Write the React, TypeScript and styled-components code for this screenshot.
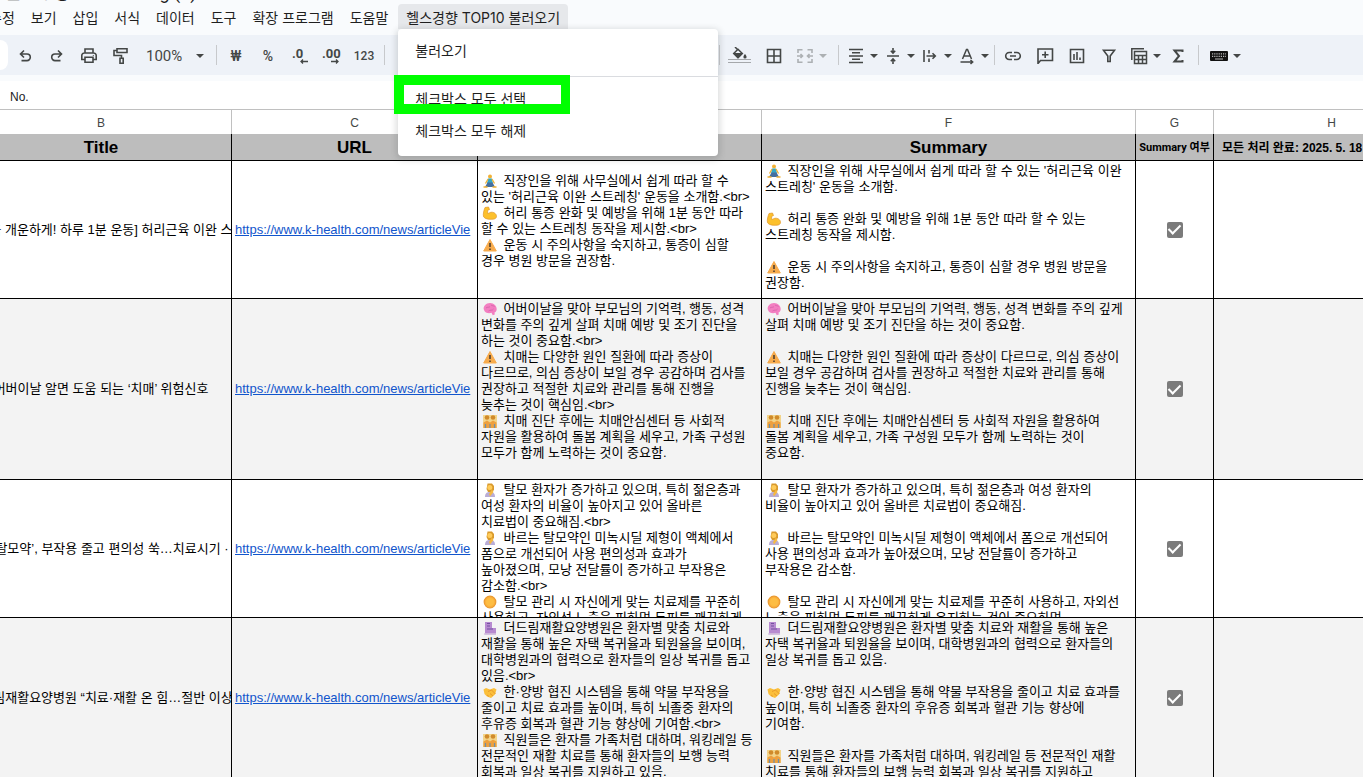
import React from 'react';
import styled, { createGlobalStyle } from 'styled-components';

const sheetFont = '"Liberation Sans", "Noto Sans CJK KR", sans-serif';
const uiFont = 'Roboto, "Noto Sans CJK KR", sans-serif';
const menuFont = 'Inter, "Noto Sans CJK KR", sans-serif';

const GlobalStyle = createGlobalStyle`
  * { box-sizing: border-box; }
  body { margin: 0; background: #fff; font-family: ${sheetFont}; color: #000; }
  button, select, input { font: inherit; color: inherit; margin: 0; }
`;

const Page = styled.div`
  display: flex;
  flex-direction: column;
  height: 100vh;
  overflow: hidden;
  background: #f9fbfd;
`;

const TitleBar = styled.header`
  display: flex;
  align-items: flex-end;
  height: 4px;
  overflow: hidden;
  padding-left: 4px;
  font: 18px/22px ${uiFont};
  color: #1f1f1f;
  white-space: pre;
`;

const MenuBar = styled.nav`
  display: flex;
  height: 31px;
  margin-left: -19px;
  font: 14px/25px ${menuFont};
  color: #1f1f1f;
`;

const MenuAnchor = styled.div`
  position: relative;
  margin-left: 2px;
`;

const MenuButton = styled.button<{ $open?: boolean }>`
  display: block;
  height: 25px;
  padding: 2px 8px 0;
  border: 0;
  border-radius: 4px 4px 0 0;
  background: ${(p) => (p.$open ? '#e6e8eb' : 'transparent')};
  white-space: nowrap;
  line-height: 23px;
`;

const Dropdown = styled.div`
  position: absolute;
  z-index: 2;
  top: 25px;
  left: 0;
  width: 320px;
  padding: 6px 0 9px;
  border-radius: 4px;
  background: #fff;
  box-shadow: 0 2px 6px 2px rgba(60, 64, 67, 0.18);
`;

const DropdownItem = styled.button`
  display: block;
  width: 100%;
  height: 32px;
  padding: 0 17px;
  border: 0;
  background: transparent;
  text-align: left;
  line-height: 32px;
`;

const DropdownRule = styled.hr`
  height: 1px;
  margin: 9px 0 6px;
  border: 0;
  background: #dadce0;
`;

const Highlight = styled.div`
  position: absolute;
  top: 46px;
  left: -4px;
  width: 176px;
  height: 39px;
  border: solid #00ff00;
  border-width: 10px 9px 10px 10px;
  pointer-events: none;
`;

const Toolbar = styled.div`
  display: flex;
  align-items: center;
  flex: none;
  height: 40px;
  background: #eef2f8;
  color: #444746;
  font: 15px/20px ${uiFont};
`;

const SearchEnd = styled.div`
  width: 8px;
  height: 30px;
  margin-right: 1px;
  border-radius: 0 15px 15px 0;
  background: #fff;
`;

const Tool = styled.button<{ $w?: number; $faded?: boolean }>`
  display: flex;
  flex: none;
  align-items: center;
  justify-content: center;
  width: ${(p) => p.$w ?? 32}px;
  height: 28px;
  padding: 2px 0 0;
  border: 0;
  background: transparent;
  opacity: ${(p) => (p.$faded ? 0.38 : 1)};
`;

const SplitTool = styled(Tool)`
  justify-content: flex-start;
  gap: 5px;
  padding-left: 5px;
`;

const ZoomTool = styled(Tool)`
  justify-content: space-between;
  padding: 2px 8px 0 9px;
`;

const SmallLabel = styled.span<{ $size?: number }>`
  font-size: ${(p) => p.$size ?? 12}px;
  font-weight: 500;
  line-height: 18px;
`;

const Divider = styled.span<{ $left?: number; $right?: number }>`
  flex: none;
  width: 1px;
  height: 20px;
  margin: 0 ${(p) => p.$right ?? 3}px 0 ${(p) => p.$left ?? 4}px;
  background: #c7c9cc;
`;

const FontTools = styled.div`
  flex: none;
  width: 331px;
`;

const FormulaBar = styled.div`
  display: flex;
  align-items: center;
  flex: none;
  height: 29px;
  margin-top: 6px;
  padding: 3px 0 0 10px;
  background: #fff;
  border-bottom: 1px solid #c0c0c0;
  font-size: 12px;
  color: #202124;
`;

const SheetView = styled.main`
  flex: 1;
  min-height: 0;
  overflow: hidden;
  background: #fff;
`;

const Sheet = styled.table`
  width: calc(100% + 116px);
  margin-left: -29px;
  table-layout: fixed;
  border-collapse: separate;
  border-spacing: 0;
`;

const Letter = styled.th`
  height: 24px;
  padding: 2px 0 0;
  border-right: 1px solid #c0c0c0;
  font-size: 12px;
  font-weight: 400;
  color: #444746;
`;

const Heading = styled.th<{ $size?: number; $left?: boolean; $ui?: boolean }>`
  height: 27px;
  padding: 2px 0 0 ${(p) => (p.$left ? 8 : 0)}px;
  border-right: 1px solid #000;
  border-bottom: 1px solid #000;
  background: #bdbdbd;
  font-family: ${(p) => (p.$ui ? uiFont : sheetFont)};
  font-size: ${(p) => p.$size ?? 17}px;
  line-height: 20px;
  font-weight: 700;
  text-align: ${(p) => (p.$left ? 'left' : 'center')};
  white-space: nowrap;
`;

const Row = styled.tr<{ $shaded?: boolean }>`
  background: ${(p) => (p.$shaded ? '#f3f3f3' : '#fff')};
`;

const Cell = styled.td`
  padding: 0;
  border-right: 1px solid #000;
  border-bottom: 1px solid #000;
  font-size: 13px;
  line-height: 16px;
  vertical-align: middle;
  text-align: center;
`;

const Centered = styled.div`
  display: flex;
  justify-content: center;
  overflow: hidden;
  white-space: nowrap;
`;

const LinkBox = styled.div`
  overflow: hidden;
  padding-left: 3px;
  text-align: left;
  white-space: nowrap;
`;

const Link = styled.a`
  color: #1155cc;
  text-decoration: underline;
`;

const Notes = styled.div<{ $h: number; $top?: number }>`
  height: ${(p) => p.$h}px;
  padding: ${(p) => p.$top ?? 2}px 0 0 3px;
  overflow: hidden;
  text-align: left;
  white-space: pre;
`;

const Line = styled.div`
  height: 16px;
`;

const Emoji = styled.svg`
  width: 16px;
  height: 16px;
  margin: 0 2px 0 1px;
  vertical-align: top;
`;

const Check = styled.input`
  display: inline-grid;
  place-content: center;
  width: 16px;
  height: 16px;
  border-radius: 2px;
  background: #7b7b7b;
  appearance: none;
  vertical-align: middle;

  &:checked::after {
    content: '';
    width: 5px;
    height: 10px;
    margin-top: -3px;
    border: solid #fff;
    border-width: 0 2px 2px 0;
    transform: rotate(45deg);
  }
`;

const Glyph = ({ children, w = 18 }: { children: React.ReactNode; w?: number }) => (
  <svg width={w} height="18" viewBox={`0 0 ${w} 18`} fill="none" stroke="currentColor" strokeWidth="1.6" aria-hidden="true">
    {children}
  </svg>
);

const Caret = () => (
  <svg width="8" height="4" viewBox="0 0 8 4" aria-hidden="true">
    <path d="M0 0h8L4 4z" fill="currentColor" />
  </svg>
);

const icons = {
  undo: <Glyph><path d="M8 3.5 4.5 7 8 10.500M4.500 7H11a3.300 3.300 0 0 1 0 6.600H5.500" /></Glyph>,
  redo: <Glyph><path d="M10 3.500 13.500 7 10 10.500M13.500 7H7a3.300 3.300 0 0 0 0 6.600h5.500" /></Glyph>,
  print: <Glyph><path d="M5 5.500V2h8v3.500M5 12.500H1.800V8.500a2.500 2.500 0 0 1 2.500-2.500h9.400a2.500 2.500 0 0 1 2.500 2.500v4H13M5 10.300h8v5H5z" /><circle cx="13.300" cy="8.500" r=".6" fill="currentColor" stroke="none" /></Glyph>,
  paint: <Glyph><path d="M5 1.800h10v3.700H5zM5 3.500H2V8.500h7.500V11M8 11.200h3.200v5H8z" /></Glyph>,
  decLess: <Glyph w={20}><text x="2" y="11" fontSize="13" fontWeight="700" fill="currentColor" stroke="none" fontFamily="Roboto, sans-serif">.0</text><path d="M18 14.500h-7M13 12.500l-2 2 2 2" strokeWidth="1.300" /></Glyph>,
  decMore: <Glyph w={20}><text x="0" y="11" fontSize="13" fontWeight="700" fill="currentColor" stroke="none" fontFamily="Roboto, sans-serif">.00</text><path d="M9 14.500h7M14 12.500l2 2-2 2" strokeWidth="1.300" /></Glyph>,
  fill: <svg width="24" height="18" viewBox="0 0 24 18" aria-hidden="true"><path d="M7 0l2.500 2.500M10 2.200l4.300 4.300-4.300 4.300-4.300-4.300z" fill="none" stroke="currentColor" strokeWidth="1.500" /><path d="M5 6h10.300L10.500 11a.8.8 0 0 1-1 0z" fill="currentColor" /><path d="M17 7s-1.600 1.800-1.600 2.900a1.600 1.600 0 0 0 3.200 0c0-1.100-1.600-2.900-1.600-2.900z" fill="currentColor" /><path d="M0 12.500h23M0 15.500h23" stroke="#a5a8ab" /></svg>,
  borders: <Glyph><path d="M2.500 2.500h13v13h-13zM9 2.500v13M2.500 9h13" /></Glyph>,
  merge: <Glyph><path d="M6.500 2.800H2V6M11.500 2.800H16V6M6.500 15.200H2V12M11.500 15.200H16V12M1 9h5.500M4.500 7l2 2-2 2M17 9h-5.500M13.500 7l-2 2 2 2" /></Glyph>,
  align: <Glyph><path d="M2 2.500h14M5 5.800h8M2 9h14M5 12.200h8M2 15.500h14" /></Glyph>,
  middle: <Glyph><path d="M3 9h12M9 1v4.500M9 17v-4.500M6.800 3.800 9 6l2.200-2.200M6.800 14.200 9 12l2.200 2.200" /></Glyph>,
  wrap: <Glyph><path d="M3 3v12M8 3v3.500M8 11.500V15M5.500 9H14M11.500 6.200 14.300 9l-2.800 2.800" /></Glyph>,
  rotate: <Glyph><path d="M4.500 12 8.500 2.500h1L13.500 12M6 9h6M2.500 15h12M12.500 13l2.200 2-2.200 2" strokeWidth="1.500" /></Glyph>,
  link: <Glyph><path d="M8 5.500H5.200a3.500 3.500 0 0 0 0 7H8M10 5.500h2.800a3.500 3.500 0 0 1 0 7H10M6 9h6" /></Glyph>,
  comment: <Glyph><path d="M2 17V2h14.500v11.500H4.500L2 16.500M9.200 4.500v6.500M6 7.800h6.500" /></Glyph>,
  chart: <Glyph><path d="M2.500 2.500h13v13h-13zM6 7v6M9 5v8M12 10.500V13" /></Glyph>,
  filter: <Glyph><path d="M3.500 3.300h11L10.200 9v5.500H7.800V9z" /></Glyph>,
  views: <Glyph><path d="M1.800 13V1.800H14M4.500 4.500h12v12h-12zM4.500 8.500h12M8.500 8.500v8M12.500 8.500v8M4.500 12.500h12" strokeWidth="1.500" /></Glyph>,
  sum: <Glyph><path d="M13.500 5V3.500H5.500L10 9l-4.500 5.500h8V13" strokeWidth="2" /></Glyph>,
  keyboard: <Glyph><rect x="0" y="4" width="18" height="10" rx="1" fill="#111" stroke="none" /><path d="M2 6.800h14M2 9.300h14" stroke="#b8b8b8" strokeWidth="1.200" strokeDasharray="1.200 1" /><path d="M5 12h8" stroke="#b8b8b8" strokeWidth="1" /></Glyph>,
};

const emojiArt: Record<string, React.ReactNode> = {
  yoga: <><circle cx="8" cy="3.500" r="2" fill="#f2b134" /><path d="M6 5.500h4l1 5H5z" fill="#35a7c4" /><path d="M6 6 3.500 10.500M10 6l2.500 4.500" stroke="#f2b134" strokeWidth="1.300" /><path d="M5.500 9.500h5l2.500 4.500H3z" fill="#466f9e" /><path d="M1.500 14h4M10.500 14h4" stroke="#f2b134" strokeWidth="1.500" /></>,
  muscle: <path d="M3 2.500 6.500 2l1 2.500-2 1L6 9c2-2.500 6-2.500 8 .5 1.300 2.500 0 4.500-3 4.700-4 .3-8 0-9.500-2.500C.8 9 2 5 3 2.500z" fill="#fcc02c" stroke="#e0962b" strokeWidth=".7" />,
  warning: <><path d="M8 2.500 14.300 14H1.700z" fill="#f7ab4c" stroke="#f7ab4c" strokeWidth="1" strokeLinejoin="round" /><path d="M8 6v4M8 11.500v1.500" stroke="#46382c" strokeWidth="1.500" /></>,
  brain: <><path d="M2 9C.5 5.500 4 2 8 2s7 3 6.700 6.500c-.2 2-1.500 2.700-2.200 3l.3 2-2 .8-1.300-2.500C7 12.500 3 12.300 2 9z" fill="#f37fc1" /><path d="M4 7c1.500-1.500 3 0 4-1.500M6.500 10c1.500-1.500 4 0 5-2M9 4c1 1 2.500.5 3.500 1.500" stroke="#d966ae" fill="none" /></>,
  people: <><path d="M1 2h14v13H1z" fill="#f3d489" /><circle cx="5" cy="4.500" r="2.300" fill="#d08a2a" /><circle cx="11" cy="4.500" r="2.300" fill="#d08a2a" /><path d="M1.500 15V9.500l3.500-2 3 2 3-2 3.500 2V15z" fill="#eda03f" /><path d="M3.500 15v-4M12.500 15v-4M8 15v-4" stroke="#6f8fa8" strokeWidth="1.200" /></>,
  person: <><path d="M5.500 1.500H10L12 4v4l-2 2H6L4.500 7z" fill="#d99a2c" /><circle cx="7.800" cy="5.500" r="2.500" fill="#ffcb59" /><path d="M3 15c0-4 2-5 5-5s5 1 5 5z" fill="#b9add6" /><path d="M10 7.500 11.500 10 8 14.500 7 12z" fill="#f5b942" /></>,
  sun: <><circle cx="8" cy="8" r="5.800" fill="#fbb03b" stroke="#eb9a30" strokeWidth="1.200" /><circle cx="8" cy="8" r="4" fill="#fdbd43" /></>,
  hospital: <><path d="M3 2h7v6h4v6.500H3z" fill="#b78ad0" /><path d="M5 3.500h3M5 6h3M5 9h6" stroke="#7451a0" strokeWidth="1.200" /><path d="M2 14h12" stroke="#d5c3df" strokeWidth="1.500" /></>,
  hands: <><path d="M1.500 5.500 4 4l4 1.500L12 4l2.500 1.500-1.500 5L9 14 5 12.500 2.500 10z" fill="#fbbf3b" /><path d="M6 7.500 9.500 6l4 4M5 11l2 1.500M8 9.500l3 2.500" stroke="#e89a2c" fill="none" /></>,
};

const emojiTag = /^\[(\w+)\](.*)$/;

const NoteText = ({ lines, h, top }: { lines: string[]; h: number; top?: number }) => (
  <Notes $h={h} $top={top}>
    {lines.map((line, i) => {
      const m = emojiTag.exec(line);
      return (
        <Line key={i}>
          {m ? <><Emoji viewBox="0 0 16 16" fill="none" aria-hidden="true">{emojiArt[m[1]]}</Emoji>{m[2]}</> : line}
        </Line>
      );
    })}
  </Notes>
);

const rows = [
  {
    h: 137,
    top: 12,
    title: '[“더욱 개운하게! 하루 1분 운동] 허리근육 이완 스',
    e: [
      '[yoga] 직장인을 위해 사무실에서 쉽게 따라 할 수',
      "있는 '허리근육 이완 스트레칭' 운동을 소개함.<br>",
      '[muscle] 허리 통증 완화 및 예방을 위해 1분 동안 따라',
      '할 수 있는 스트레칭 동작을 제시함.<br>',
      '[warning] 운동 시 주의사항을 숙지하고, 통증이 심할',
      '경우 병원 방문을 권장함.',
    ],
    f: [
      "[yoga] 직장인을 위해 사무실에서 쉽게 따라 할 수 있는 '허리근육 이완",
      "스트레칭' 운동을 소개함.",
      '',
      '[muscle] 허리 통증 완화 및 예방을 위해 1분 동안 따라 할 수 있는',
      '스트레칭 동작을 제시함.',
      '',
      '[warning] 운동 시 주의사항을 숙지하고, 통증이 심할 경우 병원 방문을',
      '권장함.',
    ],
  },
  {
    h: 180,
    title: '어버이날 알면 도움 되는 ‘치매’ 위험신호',
    e: [
      '[brain] 어버이날을 맞아 부모님의 기억력, 행동, 성격',
      '변화를 주의 깊게 살펴 치매 예방 및 조기 진단을',
      '하는 것이 중요함.<br>',
      '[warning] 치매는 다양한 원인 질환에 따라 증상이',
      '다르므로, 의심 증상이 보일 경우 공감하며 검사를',
      '권장하고 적절한 치료와 관리를 통해 진행을',
      '늦추는 것이 핵심임.<br>',
      '[people] 치매 진단 후에는 치매안심센터 등 사회적',
      '자원을 활용하여 돌봄 계획을 세우고, 가족 구성원',
      '모두가 함께 노력하는 것이 중요함.',
    ],
    f: [
      '[brain] 어버이날을 맞아 부모님의 기억력, 행동, 성격 변화를 주의 깊게',
      '살펴 치매 예방 및 조기 진단을 하는 것이 중요함.',
      '',
      '[warning] 치매는 다양한 원인 질환에 따라 증상이 다르므로, 의심 증상이',
      '보일 경우 공감하며 검사를 권장하고 적절한 치료와 관리를 통해',
      '진행을 늦추는 것이 핵심임.',
      '',
      '[people] 치매 진단 후에는 치매안심센터 등 사회적 자원을 활용하여',
      '돌봄 계획을 세우고, 가족 구성원 모두가 함께 노력하는 것이',
      '중요함.',
    ],
  },
  {
    h: 137,
    title: '[‘새 탈모약’, 부작용 줄고 편의성 쑥…치료시기 ·',
    e: [
      '[person] 탈모 환자가 증가하고 있으며, 특히 젊은층과',
      '여성 환자의 비율이 높아지고 있어 올바른',
      '치료법이 중요해짐.<br>',
      '[person] 바르는 탈모약인 미녹시딜 제형이 액체에서',
      '폼으로 개선되어 사용 편의성과 효과가',
      '높아졌으며, 모낭 전달률이 증가하고 부작용은',
      '감소함.<br>',
      '[sun] 탈모 관리 시 자신에게 맞는 치료제를 꾸준히',
      '사용하고, 자외선 노출을 피하며 두피를 깨끗하게',
    ],
    f: [
      '[person] 탈모 환자가 증가하고 있으며, 특히 젊은층과 여성 환자의',
      '비율이 높아지고 있어 올바른 치료법이 중요해짐.',
      '',
      '[person] 바르는 탈모약인 미녹시딜 제형이 액체에서 폼으로 개선되어',
      '사용 편의성과 효과가 높아졌으며, 모낭 전달률이 증가하고',
      '부작용은 감소함.',
      '',
      '[sun] 탈모 관리 시 자신에게 맞는 치료제를 꾸준히 사용하고, 자외선',
      '노출을 피하며 두피를 깨끗하게 유지하는 것이 중요하며,',
    ],
  },
  {
    h: 160,
    title: '더드림재활요양병원 “치료·재활 온 힘…절반 이상',
    e: [
      '[hospital] 더드림재활요양병원은 환자별 맞춤 치료와',
      '재활을 통해 높은 자택 복귀율과 퇴원율을 보이며,',
      '대학병원과의 협력으로 환자들의 일상 복귀를 돕고',
      '있음.<br>',
      '[hands] 한·양방 협진 시스템을 통해 약물 부작용을',
      '줄이고 치료 효과를 높이며, 특히 뇌졸중 환자의',
      '후유증 회복과 혈관 기능 향상에 기여함.<br>',
      '[people] 직원들은 환자를 가족처럼 대하며, 워킹레일 등',
      '전문적인 재활 치료를 통해 환자들의 보행 능력',
      '회복과 일상 복귀를 지원하고 있음.',
    ],
    f: [
      '[hospital] 더드림재활요양병원은 환자별 맞춤 치료와 재활을 통해 높은',
      '자택 복귀율과 퇴원율을 보이며, 대학병원과의 협력으로 환자들의',
      '일상 복귀를 돕고 있음.',
      '',
      '[hands] 한·양방 협진 시스템을 통해 약물 부작용을 줄이고 치료 효과를',
      '높이며, 특히 뇌졸중 환자의 후유증 회복과 혈관 기능 향상에',
      '기여함.',
      '',
      '[people] 직원들은 환자를 가족처럼 대하며, 워킹레일 등 전문적인 재활',
      '치료를 통해 환자들의 보행 능력 회복과 일상 복귀를 지원하고',
    ],
  },
];

const menus = ['수정', '보기', '삽입', '서식', '데이터', '도구', '확장 프로그램', '도움말'];

export default function App() {
  return (
    <Page>
      <GlobalStyle />
      <TitleBar>헬스경향 TOP10 Blog (1)</TitleBar>
      <MenuBar>
        {menus.map((m) => <MenuButton key={m}>{m}</MenuButton>)}
        <MenuAnchor>
          <MenuButton $open aria-expanded="true">헬스경향 TOP10 불러오기</MenuButton>
          <Dropdown>
            <DropdownItem>불러오기</DropdownItem>
            <DropdownRule />
            <DropdownItem>체크박스 모두 선택</DropdownItem>
            <DropdownItem>체크박스 모두 해제</DropdownItem>
            <Highlight />
          </Dropdown>
        </MenuAnchor>
      </MenuBar>
      <Toolbar>
        <SearchEnd />
        <Tool aria-label="실행취소">{icons.undo}</Tool>
        <Tool aria-label="재실행">{icons.redo}</Tool>
        <Tool aria-label="인쇄">{icons.print}</Tool>
        <Tool aria-label="서식 복사">{icons.paint}</Tool>
        <ZoomTool $w={75}>100%<Caret /></ZoomTool>
        <Divider />
        <Tool><SmallLabel $size={14}>₩</SmallLabel></Tool>
        <Tool><SmallLabel $size={14}>%</SmallLabel></Tool>
        <Tool aria-label="소수점 이하 자릿수 감소">{icons.decLess}</Tool>
        <Tool aria-label="소수점 이하 자릿수 증가">{icons.decMore}</Tool>
        <Tool><SmallLabel>123</SmallLabel></Tool>
        <Divider />
        <FontTools />
        <Divider $left={0} />
        <Tool $w={34} aria-label="채우기 색상">{icons.fill}</Tool>
        <Tool $w={34} aria-label="테두리">{icons.borders}</Tool>
        <SplitTool $w={43} $faded aria-label="셀 병합">{icons.merge}<Caret /></SplitTool>
        <Divider />
        <SplitTool $w={37} aria-label="가로 정렬">{icons.align}<Caret /></SplitTool>
        <SplitTool $w={37} aria-label="세로 정렬">{icons.middle}<Caret /></SplitTool>
        <SplitTool $w={37} aria-label="텍스트 줄바꿈">{icons.wrap}<Caret /></SplitTool>
        <SplitTool $w={37} aria-label="텍스트 회전">{icons.rotate}<Caret /></SplitTool>
        <Divider $right={2} />
        <Tool aria-label="링크 삽입">{icons.link}</Tool>
        <Tool aria-label="댓글 삽입">{icons.comment}</Tool>
        <Tool aria-label="차트 삽입">{icons.chart}</Tool>
        <Tool aria-label="필터 만들기">{icons.filter}</Tool>
        <SplitTool $w={37} aria-label="필터 보기">{icons.views}<Caret /></SplitTool>
        <Tool aria-label="함수">{icons.sum}</Tool>
        <Divider $right={6} />
        <SplitTool $w={37} aria-label="입력 도구">{icons.keyboard}<Caret /></SplitTool>
      </Toolbar>
      <FormulaBar>No.</FormulaBar>
      <SheetView>
        <Sheet>
          <colgroup>
            <col style={{ width: 261 }} />
            <col style={{ width: 246 }} />
            <col style={{ width: 284 }} />
            <col style={{ width: 374 }} />
            <col style={{ width: 78 }} />
            <col />
          </colgroup>
          <thead>
            <tr>
              {['B', 'C', 'E', 'F', 'G', 'H'].map((c) => <Letter key={c}>{c}</Letter>)}
            </tr>
            <tr>
              <Heading>Title</Heading>
              <Heading>URL</Heading>
              <Heading>Original (br)</Heading>
              <Heading>Summary</Heading>
              <Heading $size={11} $ui>Summary 여부</Heading>
              <Heading $size={12} $left>모든 처리 완료: 2025. 5. 18</Heading>
            </tr>
          </thead>
          <tbody>
            {rows.map((r, i) => (
              <Row key={i} $shaded={i % 2 === 1}>
                <Cell><Centered>{r.title}</Centered></Cell>
                <Cell><LinkBox><Link href="#">https://www.k-health.com/news/articleVie</Link></LinkBox></Cell>
                <Cell><NoteText h={r.h} top={r.top} lines={r.e} /></Cell>
                <Cell><NoteText h={r.h} lines={r.f} /></Cell>
                <Cell><Check type="checkbox" defaultChecked aria-label="Summary 여부" /></Cell>
                <Cell />
              </Row>
            ))}
          </tbody>
        </Sheet>
      </SheetView>
    </Page>
  );
}
